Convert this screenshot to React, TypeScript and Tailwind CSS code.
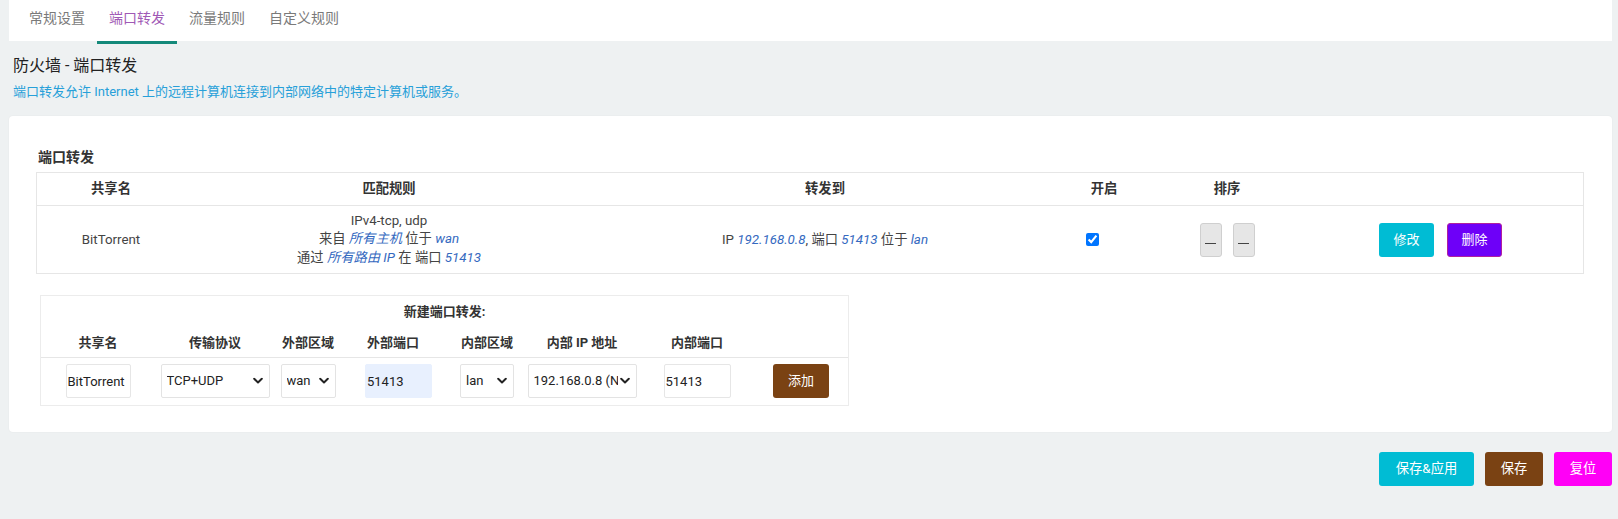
import React from "react";

const FONT = "font-['Roboto','Noto_Sans_CJK_SC',sans-serif]";

function Chevron() {
  return (
    <svg width="10" height="7" viewBox="0 0 10 7" className="pointer-events-none absolute right-[7px] top-1/2 -translate-y-1/2">
      <path d="M1.2 1.3 L5 5 L8.8 1.3" fill="none" stroke="#222" strokeWidth="2" strokeLinecap="round" strokeLinejoin="round" />
    </svg>
  );
}

function Select({ value, w }: { value: string; w: string }) {
  return (
    <div className={`relative h-[34px] ${w}`}>
      <select
        defaultValue={value}
        className={`h-full w-full appearance-none rounded-[2px] border border-[#e3e3e3] bg-white pl-[5px] pr-[18px] text-[13px] text-[#222] outline-none ${FONT}`}
      >
        <option>{value}</option>
      </select>
      <Chevron />
    </div>
  );
}

function Link({ children }: { children: React.ReactNode }) {
  return <span className="italic text-[#3469c0]">{children}</span>;
}

function SortBtn() {
  return (
    <div className="flex h-[34px] w-[22px] items-center justify-center rounded-[3px] border border-[#cfcfcf] bg-[#e6e6e6]">
      <div className="mt-[8px] h-[1.5px] w-[11px] bg-[#444]" />
    </div>
  );
}

export default function App() {
  const tabs = ["常规设置", "端口转发", "流量规则", "自定义规则"];
  return (
    <div className={`min-h-[519px] bg-[#eef1f2] pl-[9px] pr-[6px] text-[#333] ${FONT}`}>
      {/* Tabs */}
      <div className="flex h-[41px] items-start bg-white pl-[8px]">
        {tabs.map((t, i) => (
          <div
            key={t}
            className={`flex h-[44px] items-center px-[12px] pb-[4px] text-[14px] ${
              i === 1 ? "border-b-[3px] border-[#14897a] text-[#9f59b5]" : "border-b-[3px] border-transparent text-[#7a7a7a]"
            }`}
          >
            {t}
          </div>
        ))}
      </div>

      {/* Heading */}
      <div className="mt-[14px] pl-[4px] text-[16px] leading-[22px] text-[#222]">防火墙 - 端口转发</div>
      <div className="mt-[6px] pl-[4px] text-[13px] leading-[18px] text-[#27a0d9]">
        端口转发允许 Internet 上的远程计算机连接到内部网络中的特定计算机或服务。
      </div>

      {/* Card */}
      <div className="mt-[15px] rounded-[4px] bg-white pb-[26px] pl-[27px] pr-[28px] pt-[32px] shadow-[0_0_2px_rgba(0,0,0,0.06)]">
        <div className="pl-[2px] text-[14px] font-bold leading-[18px] text-[#333]">端口转发</div>

        {/* Table */}
        <div className="mt-[6px] border border-[#e6e6e6] text-[13.3px]">
          <div className="flex h-[33px] items-center border-b border-[#e6e6e6] font-bold text-[#333]">
            <div className="w-[148px] text-center">共享名</div>
            <div className="w-[408px] text-center">匹配规则</div>
            <div className="w-[464px] text-center">转发到</div>
            <div className="w-[94px] text-center">开启</div>
            <div className="w-[152px] text-center">排序</div>
            <div className="flex-1" />
          </div>
          <div className="flex h-[67px] items-center text-[#444]">
            <div className="w-[148px] text-center">BitTorrent</div>
            <div className="w-[408px] text-center leading-[18.5px]">
              <div>IPv4-tcp, udp</div>
              <div>
                来自 <Link>所有主机</Link> 位于 <Link>wan</Link>
              </div>
              <div>
                通过 <Link>所有路由 IP</Link> 在 端口 <Link>51413</Link>
              </div>
            </div>
            <div className="w-[464px] text-center">
              IP <Link>192.168.0.8</Link>, 端口 <Link>51413</Link> 位于 <Link>lan</Link>
            </div>
            <div className="flex w-[94px] justify-start pl-[29px]">
              <input type="checkbox" defaultChecked className="m-0 h-[13px] w-[13px] accent-[#0075ff]" />
            </div>
            <div className="flex w-[152px] justify-center gap-[11px]">
              <SortBtn />
              <SortBtn />
            </div>
            <div className="flex flex-1 gap-[13px] pl-[76px]">
              <button className="h-[34px] w-[55px] rounded-[3px] bg-[#00bcd4] text-[13px] text-white">修改</button>
              <button className="h-[34px] w-[55px] rounded-[3px] border border-[#b0209e] bg-[#6e00f8] text-[13px] text-white">删除</button>
            </div>
          </div>
        </div>

        {/* New port forward */}
        <div className="ml-[4px] mt-[21px] w-[809px] border border-[#ececec] text-[13px]">
          <div className="flex h-[32px] items-center justify-center font-bold text-[#333]">新建端口转发:</div>
          <div className="flex h-[30px] items-center border-b border-[#e6e6e6] font-bold text-[#333]">
            <div className="w-[114px] text-center">共享名</div>
            <div className="w-[120px] text-center">传输协议</div>
            <div className="w-[66px] text-center">外部区域</div>
            <div className="w-[104px] text-center">外部端口</div>
            <div className="w-[84px] text-center">内部区域</div>
            <div className="w-[106px] text-center">内部 IP 地址</div>
            <div className="w-[124px] text-center">内部端口</div>
            <div className="flex-1" />
          </div>
          <div className="flex items-center pb-[7px] pt-[6px]">
            <div className="flex w-[114px] justify-center">
              <input
                defaultValue="BitTorrent"
                className={`h-[34px] w-[65px] rounded-[2px] border border-[#e6e6e6] px-[1px] text-[13px] text-[#222] outline-none ${FONT}`}
              />
            </div>
            <div className="flex w-[120px] justify-center">
              <Select value="TCP+UDP" w="w-[109px]" />
            </div>
            <div className="flex w-[66px] justify-center">
              <Select value="wan" w="w-[55px]" />
            </div>
            <div className="flex w-[104px] justify-start pl-[24px]">
              <input
                defaultValue="51413"
                className={`h-[34px] w-[67px] rounded-[2px] border border-[#e8f0fe] bg-[#e8f0fe] px-[1px] text-[13px] text-[#222] outline-none ${FONT}`}
              />
            </div>
            <div className="flex w-[84px] justify-center">
              <Select value="lan" w="w-[54px]" />
            </div>
            <div className="flex w-[106px] justify-center">
              <Select value="192.168.0.8 (N" w="w-[109px] shrink-0" />
            </div>
            <div className="flex w-[124px] justify-center">
              <input
                defaultValue="51413"
                className={`h-[34px] w-[67px] rounded-[2px] border border-[#e6e6e6] px-[1px] text-[13px] text-[#222] outline-none ${FONT}`}
              />
            </div>
            <div className="flex flex-1 justify-center pr-[5px]">
              <button className="h-[34px] w-[56px] rounded-[3px] bg-[#7a4213] text-[13px] text-white">添加</button>
            </div>
          </div>
        </div>
      </div>

      {/* Bottom actions */}
      <div className="mt-[20px] flex justify-end gap-[11px] text-[13.3px] text-white">
        <button className="h-[34px] w-[95px] rounded-[3px] bg-[#00bcd4]">保存&amp;应用</button>
        <button className="h-[34px] w-[58px] rounded-[3px] bg-[#7a4213]">保存</button>
        <button className="h-[34px] w-[58px] rounded-[3px] bg-[#ff00f6]">复位</button>
      </div>
    </div>
  );
}
